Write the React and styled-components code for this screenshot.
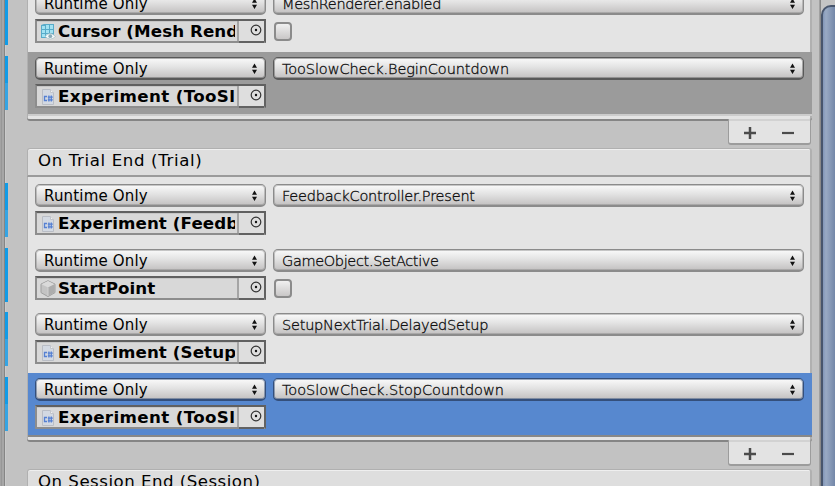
import React from "react";
import styled, { createGlobalStyle } from "styled-components";

const Global = createGlobalStyle`
  * { box-sizing: border-box; }
  body { margin: 0; background: #c2c2c2; overflow: hidden; }
`;

const Window = styled.div`
  display: flex;
  width: 835px;
  height: 486px;
  overflow: hidden;
  background: #c2c2c2;
  color: #000;
  font-family: "DejaVu Sans", sans-serif;
`;

const Gutter = styled.div`
  flex: none;
  width: 5px;
  background: linear-gradient(90deg, #a3a3a3 0 1px, #979797 1px 2px, #a6a6a6 2px 4px, #858585 4px 5px);
`;

const MarkColumn = styled.div`
  flex: none;
  width: 22px;
  background: linear-gradient(90deg, #cbcbcb 0 1px, #c2c2c2 1px);
`;

const Mark = styled.div`
  width: 3px;
  height: ${(p) => p.$h}px;
  margin-top: ${(p) => p.$gap}px;
  background: ${(p) => (p.$split ? "linear-gradient(#119be6 50%, #35a4e3 50%)" : "#119be6")};
`;

const Events = styled.div`
  flex: none;
  width: 785px;
  height: 486px;
  overflow: hidden;
`;

const EventPanel = styled.section`
  height: ${(p) => p.$h}px;
  margin-top: ${(p) => p.$gap || 0}px;
`;

const Header = styled.header`
  height: 29px;
  padding: 1px 0 0 10px;
  border: solid #b0b0b0;
  border-width: 1px 2px 2px 1px;
  border-bottom-color: #9b9b9b;
  border-radius: 3px 3px 0 0;
  background: #dedede;
  box-shadow: inset 0 1px #efefef;
`;

const Title = styled.span`
  display: inline-block;
  font-size: 16.6px;
  line-height: 22px;
  letter-spacing: ${(p) => p.$ls}px;
  white-space: pre;
  transform: scaleY(0.94);
`;

const List = styled.div`
  padding-top: ${(p) => p.$top || 0}px;
  padding-bottom: 5px;
  background: linear-gradient(90deg, #b0b0b0 0 1px, #e4e4e4 1px 783px, #b0b0b0 783px);
  border-bottom: 2px solid #858585;
  border-radius: 0 0 3px 3px;
`;

const rowColors = { plain: "transparent", grey: "#9b9b9b", blue: "#5788cf" };
const ruleColors = { plain: "transparent", grey: "#cccccc", blue: "#888888" };

const Row = styled.div`
  display: grid;
  grid-template-columns: 231px 531px;
  grid-template-rows: 23px 24px;
  column-gap: 7px;
  row-gap: 4px;
  height: ${(p) => p.$h}px;
  margin-left: 1px;
  padding: 5px 0 0 7px;
  background: ${(p) => rowColors[p.$tone]};
  box-shadow: 0 2px ${(p) => ruleColors[p.$tone]};
`;

const edges = { plain: "#8b8b8b", grey: "#595959", blue: "#344f7b" };

const Select = styled.div`
  display: flex;
  align-items: center;
  justify-content: space-between;
  height: 23px;
  padding: 2px 8px 0;
  border: solid ${(p) => edges[p.$tone]};
  border-width: 1px 1px 2px 1px;
  border-radius: 5px;
  background: linear-gradient(#fafafa, #e3e3e3 45%, #c3c1c1);
  box-shadow: inset 0 0 0 1px ${(p) => edges[p.$tone]}77;
`;

const Mode = styled.span`
  font-size: 15px;
  line-height: 18px;
  letter-spacing: 0.17px;
`;

const Method = styled.span`
  font-size: 14.5px;
  line-height: 18px;
  font-weight: 200;
  letter-spacing: ${(p) => p.$ls}px;
  -webkit-text-stroke: 0.3px #111;
`;

const Arrows = styled.svg`
  flex: none;
  width: 5px;
  height: 12px;
`;

const ObjectField = styled.div`
  display: grid;
  grid-template-columns: 202px 25px;
  border: 2px solid #8d8d8d;
  border-top-color: #606060;
  border-right-color: #626262;
  height: 24px;
  background: #d8d8d8;
`;

const ObjectValue = styled.div`
  display: flex;
  align-items: center;
  overflow: hidden;
  padding-left: 3px;
  border-right: 2px solid #a5a5a5;
  box-shadow: inset 0 1px #c6c6c6;
`;

const ObjectName = styled.span`
  flex: 1;
  overflow: hidden;
  margin: 0 2px 0 1px;
  padding-left: 1px;
  font-size: 16.7px;
  font-weight: 700;
  line-height: 20px;
  letter-spacing: ${(p) => p.$ls}px;
  white-space: pre;
  transform: scaleY(0.94);
`;

const Picker = styled.div`
  display: flex;
  align-items: center;
  justify-content: center;
  padding: 0 0 2px 8px;
  background: #dedede;
  box-shadow: 0 2px #626262;
`;

const Checkbox = styled.div`
  width: 18px;
  height: 19px;
  margin: 3px 0 0 1px;
  border: 2px solid #8b8b8b;
  border-radius: 4px;
  background: linear-gradient(#f0f0f0, #c9c7c7);
`;

const Footer = styled.div`
  display: flex;
  align-items: center;
  gap: 26px;
  width: 83px;
  height: 26px;
  margin: -2px 0 0 701px;
  padding: 3px 0 0 15px;
  border: solid #9c9c9c;
  border-width: 0 1px 2px 1px;
  border-radius: 0 0 3px 3px;
  background: linear-gradient(#d2d2d2 0 2px, #e3e3e3 2px);
  position: relative;
`;

const Scroll = styled.div`
  flex: 1;
  display: flex;
  margin-left: 7px;
  padding-top: 5px;
  background: linear-gradient(90deg, #a0a0a0 0 1px, #898989 1px 2px, #c5c5c5 2px);
`;

const Thumb = styled.div`
  flex: none;
  width: 24px;
  height: 500px;
  margin-left: 2px;
  border: 2px solid #48566d;
  border-radius: 10px 10px 0 0;
  background: linear-gradient(90deg, #8296b8, #99aac4 3px, #6f83a5 13px);
`;

function ObjectIcon({ kind }) {
  if (kind === "mesh")
    return (
      <svg width="16" height="17" viewBox="0 0 16 17">
        <path d="M1 2 4 1h10v12l-3 2H1z" fill="#58abc9" />
        <path d="M2 3h3v3H2zm4-1h3v4H6zm4 0h3v4h-3zM2 7h3v3H2zm4 0h3v3H6zm4 0h3v3h-3zM2 11h3v3H2zm4 0h3v3H6z" fill="#a3e2f2" />
        <path d="M5 13.500q5-6 10.500 0-5 5-10.500 0" fill="#f6fbfc" stroke="#a5bbc2" strokeWidth=".7" />
        <circle cx="10.300" cy="13.200" r="1.900" fill="#8babb8" />
      </svg>
    );
  if (kind === "cube")
    return (
      <svg width="16" height="17" viewBox="0 0 16 17">
        <path d="m8 .7 7 3.400v8.500l-7 4-7-4V4.100z" fill="#c4c4c4" stroke="#a0a0a0" />
        <path d="m8 1 6.500 3.300L8 7.500 1.500 4.300z" fill="#dadada" />
        <path d="m8 7.500 6.500-3.200v8L8 16z" fill="#acacac" />
        <path d="M8 7.500V16" stroke="#d2d2d2" />
      </svg>
    );
  return (
    <svg width="16" height="17" viewBox="0 0 16 17">
      <path d="M2.500 1.500h8l3 3v12h-11z" fill="#d3d9e2" stroke="#b9bdc5" />
      <path d="M10.500 1.500v3h3" fill="#f0f0f0" stroke="#c2c5ca" />
      <path d="M7 8.500H4.500v4H7M8.900 7.500v6M11.300 7.500v6M7.800 9.200h5M7.800 11.800h5" fill="none" stroke="#5580d2" strokeWidth="1.300" />
    </svg>
  );
}

function Dropdown({ tone, children }) {
  return (
    <Select $tone={tone}>
      {children}
      <Arrows viewBox="0 0 5 12">
        <path d="M2.500 0.500 5 4.700H0zM2.500 11 5 6.800H0z" fill="#111" />
      </Arrows>
    </Select>
  );
}

function Listener({ h, tone = "plain", icon = "script", name, nls, method, ls, check }) {
  return (
    <Row $h={h} $tone={tone}>
      <Dropdown tone={tone}><Mode>Runtime Only</Mode></Dropdown>
      <Dropdown tone={tone}><Method $ls={ls}>{method}</Method></Dropdown>
      <ObjectField>
        <ObjectValue>
          <ObjectIcon kind={icon} />
          <ObjectName $ls={nls}>{name}</ObjectName>
        </ObjectValue>
        <Picker>
          <svg width="12" height="12" viewBox="0 0 12 12">
            <circle cx="6" cy="6" r="4.800" fill="none" stroke="#333" strokeWidth="1.200" />
            <circle cx="6" cy="6" r="1.200" fill="#111" />
          </svg>
        </Picker>
      </ObjectField>
      {check && <Checkbox />}
    </Row>
  );
}

function ListFooter() {
  return (
    <Footer>
      <svg width="12" height="12" viewBox="0 0 12 12"><path d="M6 0v12M0 6h12" stroke="#4b4b4b" strokeWidth="2.500" /></svg>
      <svg width="12" height="12" viewBox="0 0 12 12"><path d="M0 6h12" stroke="#4b4b4b" strokeWidth="2.200" /></svg>
    </Footer>
  );
}

const marks = [
  [0, 45], [11, 54, true], [73, 54, true], [11, 54], [10, 54, true], [11, 54, true],
];

export default function App() {
  return (
    <>
      <Global />
      <Window>
        <Gutter />
        <MarkColumn>
          {marks.map(([gap, h, split], i) => <Mark key={i} $gap={gap} $h={h} $split={split} />)}
        </MarkColumn>
        <Events>
          <EventPanel $h={161} $gap={-13}>
            <List>
              <Listener h={65} icon="mesh" name="Cursor (Mesh Renderer)" nls={0.08} method="MeshRenderer.enabled" ls={-0.35} check />
              <Listener h={62} tone="grey" name="Experiment (TooSlowCheck)" nls={0.36} method="TooSlowCheck.BeginCountdown" ls={-0.1} />
            </List>
            <ListFooter />
          </EventPanel>
          <EventPanel $h={321}>
            <Header><Title $ls={0.63}>On Trial End (Trial)</Title></Header>
            <List $top={2}>
              <Listener h={65} name="Experiment (FeedbackController)" nls={0.1} method="FeedbackController.Present" ls={-0.2} />
              <Listener h={64} icon="cube" name="StartPoint" nls={0.05} method="GameObject.SetActive" ls={-0.35} check />
              <Listener h={65} name="Experiment (SetupNextTrial)" nls={0.1} method="SetupNextTrial.DelayedSetup" ls={-0.22} />
              <Listener h={62} tone="blue" name="Experiment (TooSlowCheck)" nls={0.36} method="TooSlowCheck.StopCountdown" ls={-0.02} />
            </List>
            <ListFooter />
          </EventPanel>
          <EventPanel $h={29}>
            <Header><Title $ls={0.5}>On Session End (Session)</Title></Header>
          </EventPanel>
        </Events>
        <Scroll><Thumb /></Scroll>
      </Window>
    </>
  );
}
